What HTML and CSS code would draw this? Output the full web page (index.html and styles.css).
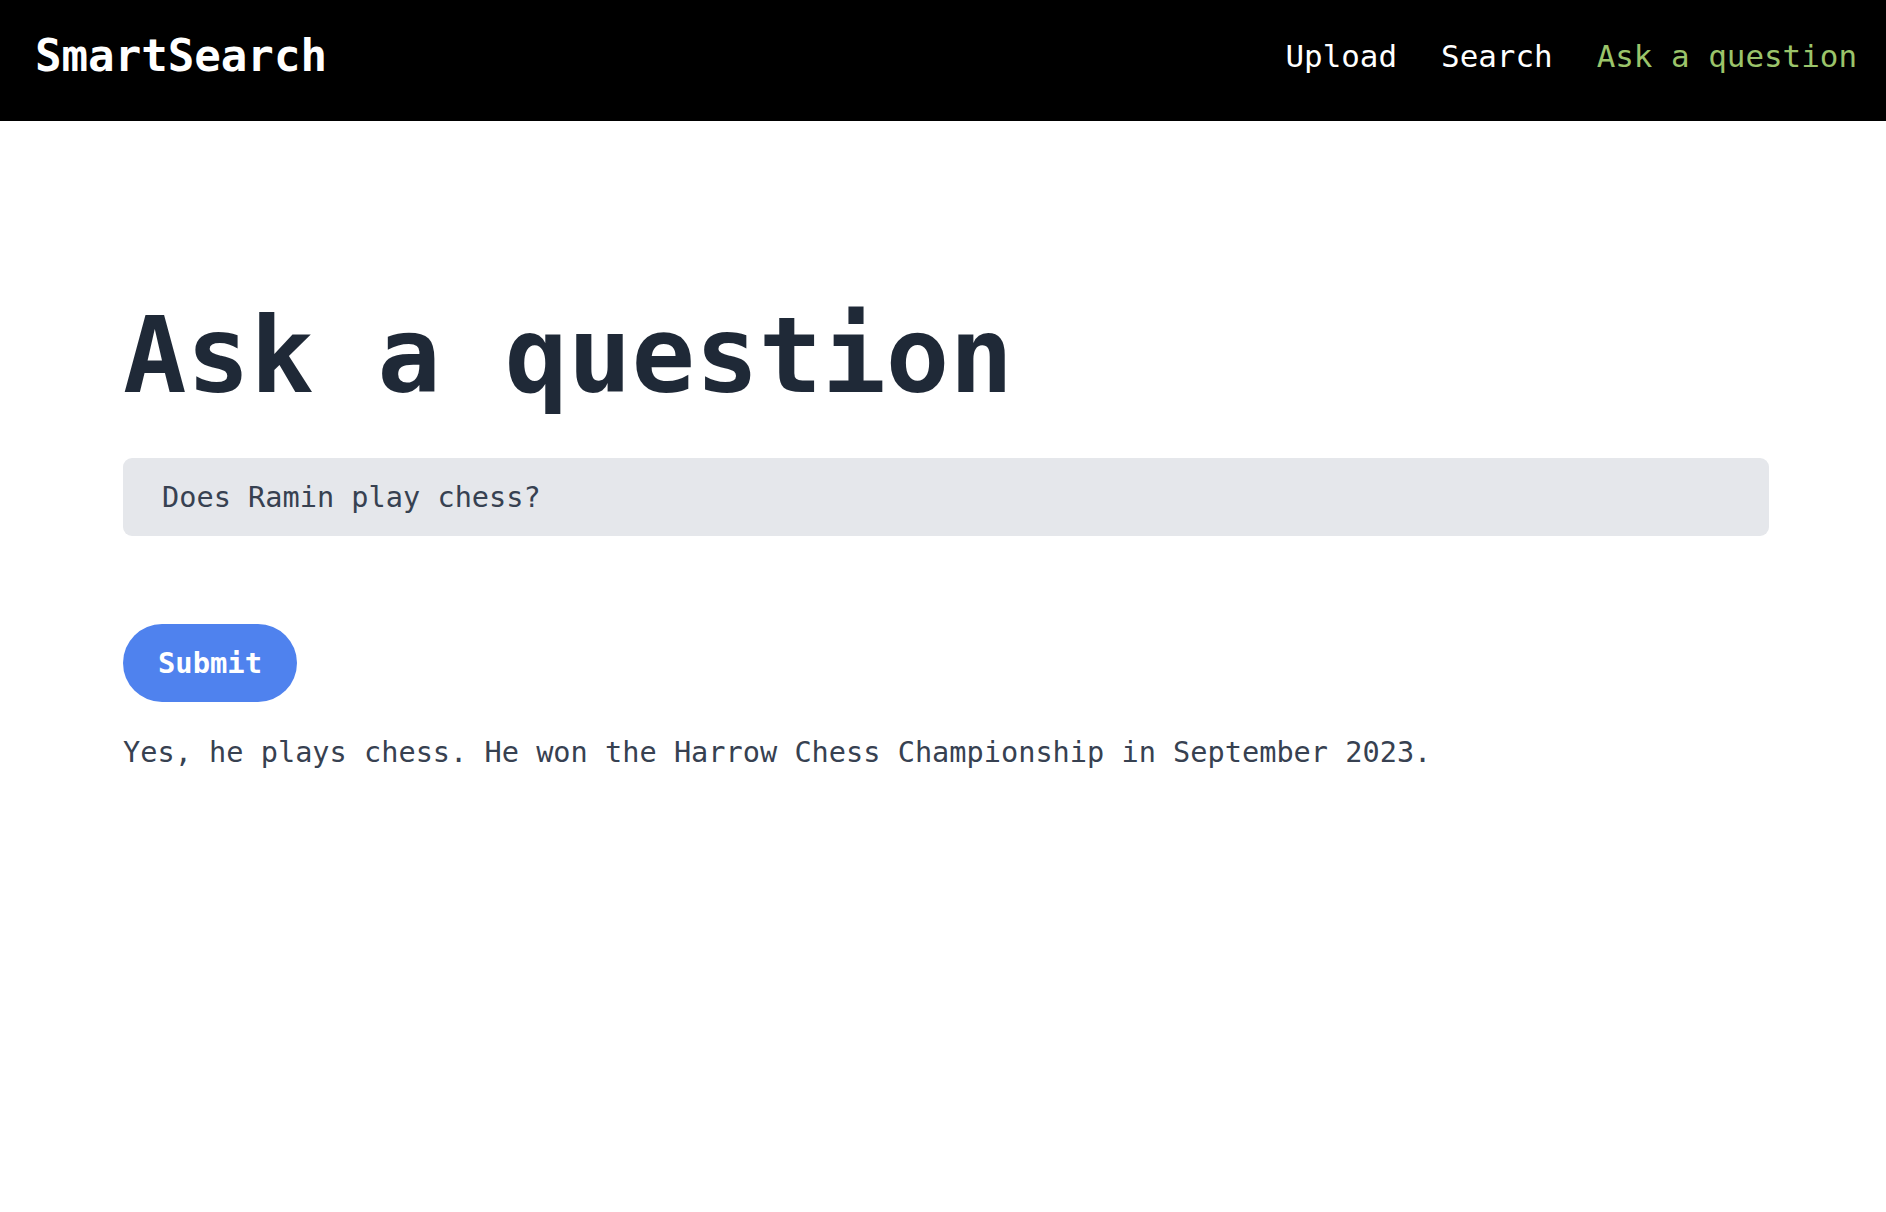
FILE: index.html
```html
<!DOCTYPE html>
<html lang="en">
<head>
<meta charset="utf-8">
<title>SmartSearch</title>
<link rel="stylesheet" href="styles.css">
</head>
<body>
<nav class="navbar">
  <div class="brand">SmartSearch</div>
  <div class="links">
    <a class="link" href="#">Upload</a>
    <a class="link" href="#">Search</a>
    <a class="link active" href="#">Ask a question</a>
  </div>
</nav>
<main class="content">
  <h1 class="title">Ask a question</h1>
  <div class="field">Does Ramin play chess?</div>
  <button class="submit">Submit</button>
  <p class="answer">Yes, he plays chess. He won the Harrow Chess Championship in September 2023.</p>
</main>
</body>
</html>
```

FILE: styles.css
```css
* { box-sizing: border-box; }
html, body {
  margin: 0;
  padding: 0;
  background: #ffffff;
  font-family: "DejaVu Sans Mono", "Liberation Mono", monospace;
}
.navbar {
  height: 121px;
  background: #000000;
  display: flex;
  align-items: center;
  justify-content: space-between;
  padding: 0 29px 0 35px;
}
.brand {
  color: #ffffff;
  font-weight: bold;
  font-size: 44.1px;
  margin-top: -10px;
}
.links {
  display: flex;
  gap: 44px;
  margin-top: -10px;
}
.link {
  color: #ffffff;
  text-decoration: none;
  font-size: 30.9px;
}
.link.active {
  color: #9bc46a;
}
.content {
  padding: 173px 117px 0 123px;
}
.title {
  margin: 0;
  font-size: 105.6px;
  font-weight: bold;
  color: #1f2937;
  line-height: normal;
}
.field {
  margin-top: 41px;
  height: 78px;
  background: #e5e7eb;
  border-radius: 9px;
  padding: 0 39px;
  display: flex;
  align-items: center;
  font-size: 28.6px;
  color: #374151;
}
.submit {
  margin-top: 88px;
  height: 78px;
  padding: 0 35px;
  border: none;
  border-radius: 39px;
  background: #4f82ee;
  color: #ffffff;
  font-family: "DejaVu Sans Mono", "Liberation Mono", monospace;
  font-weight: bold;
  font-size: 28.8px;
  display: block;
}
.answer {
  margin: 33px 0 0 0;
  font-size: 28.6px;
  color: #374151;
  line-height: normal;
}
```
